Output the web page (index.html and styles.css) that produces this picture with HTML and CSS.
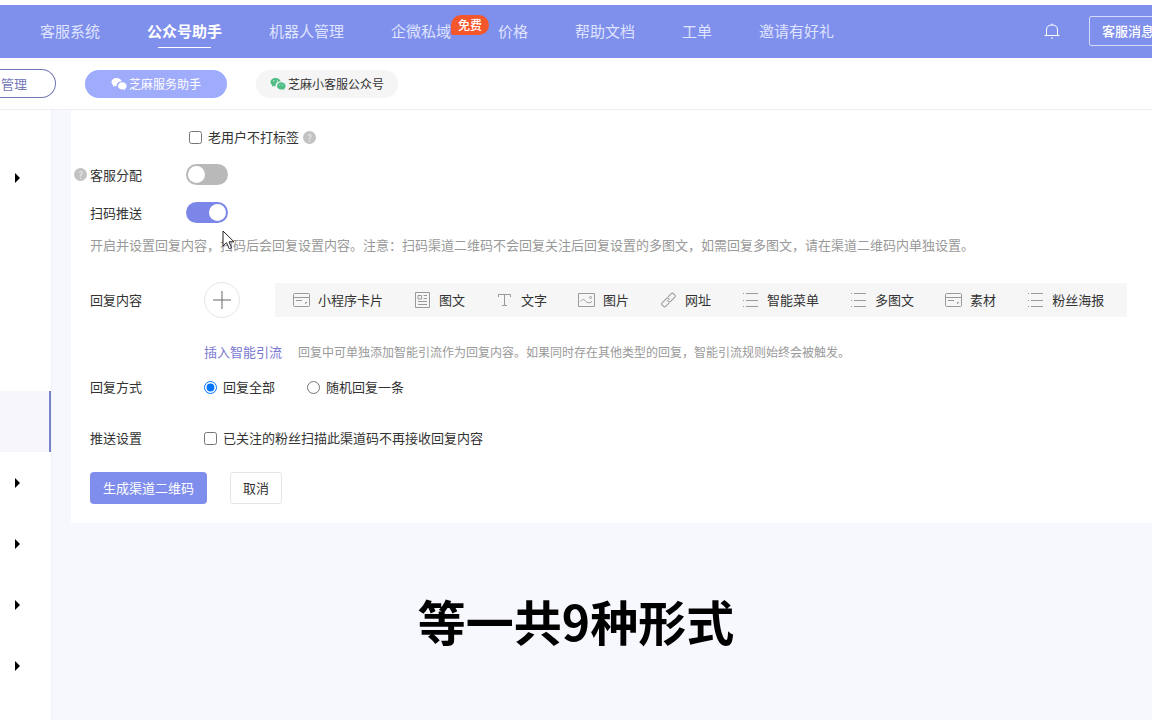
FILE: index.html
```html
<!DOCTYPE html>
<html lang="zh-CN">
<head>
<meta charset="utf-8">
<title>公众号助手</title>
<link rel="stylesheet" href="styles.css">
</head>
<body>
<svg class="defs" aria-hidden="true">
  <symbol id="wechat" viewBox="0 0 16 14">
    <path fill="currentColor" d="M5.6 1C2.7 1 .5 2.8.5 5.100c0 1.300.7 2.400 1.800 3.200l-.5 1.500 1.800-.9c.6.200 1.200.3 1.900.3C5.300 6.300 7.700 4.200 10.700 4.400 10.200 2.400 8.100 1 5.600 1z"/>
    <path fill="currentColor" d="M15.600 8.900c0-2-1.900-3.600-4.300-3.600S7 6.900 7 8.900s1.900 3.600 4.300 3.600c.5 0 1-.1 1.500-.2l1.500.9-.4-1.300c1-.700 1.700-1.800 1.700-3z"/>
    <circle class="eye" cx="3.900" cy="3.900" r=".6"/><circle class="eye" cx="7.300" cy="3.900" r=".6"/>
    <circle class="eye" cx="9.900" cy="8" r=".5"/><circle class="eye" cx="12.700" cy="8" r=".5"/>
  </symbol>
  <symbol id="card" viewBox="0 0 17 14"><path d="M1.500.5h14q1 0 1 1v11q0 1-1 1h-14q-1 0-1-1v-11q0-1 1-1zM.5 4.500h16M3 7.500h6M12.500 11V9.500h1.500"/></symbol>
  <symbol id="article" viewBox="0 0 17 16"><path d="M1.500.5h14v15h-14zM4 3.500h3.500v3.500H4zM9.500 3.500H13M9.500 6.500H13M4 9.500h9M4 12.500h9"/></symbol>
  <symbol id="text" viewBox="0 0 17 14"><path d="M2.500 4V1.500h12V4M8.500 1.500v11M6 12.500h5"/></symbol>
  <symbol id="image" viewBox="0 0 17 14"><path d="M.5.5h16v13H.5zM2.500 8.500c2-2.500 3.500-2.500 5-.5s3.500 2.500 6.500.500"/><circle cx="12.500" cy="4.500" r="1"/></symbol>
  <symbol id="link" viewBox="0 0 17 16"><g transform="rotate(-45 8.500 8)"><path d="M7 10.500H2Q.5 10.500.5 9V7Q.5 5.500 2 5.500H8Q9.500 5.500 9.500 7V8.500M10 5.500H15Q16.500 5.500 16.500 7V9Q16.500 10.500 15 10.500H9Q7.500 10.500 7.500 9V7.500"/></g></symbol>
  <symbol id="list" viewBox="0 0 17 14"><path d="M4 .5h12M4 7.500h12M4 13.500h12M1 .5h1M1 7.500h1M1 13.500h1"/></symbol>
</svg>

<header class="topbar">
  <nav class="nav">
    <a href="#">客服系统</a>
    <a href="#" class="current">公众号助手</a>
    <a href="#">机器人管理</a>
    <a href="#">企微私域<span class="badge">免费</span></a>
    <a href="#">价格</a>
    <a href="#">帮助文档</a>
    <a href="#">工单</a>
    <a href="#">邀请有好礼</a>
  </nav>
  <div class="tools">
    <button class="bell" type="button" aria-label="通知">
      <svg viewBox="0 0 16 16"><path d="M.5 12.500h15M2.500 12.500V7q0-5 5.500-5t5.500 5v5.500M8 2V.500M7 15h2"/></svg>
    </button>
    <button class="messages" type="button">客服消息</button>
  </div>
</header>

<div class="accounts">
  <button class="manage" type="button">管理</button>
  <button class="account selected" type="button"><svg><use href="#wechat"/></svg>芝麻服务助手</button>
  <button class="account" type="button"><svg><use href="#wechat"/></svg>芝麻小客服公众号</button>
</div>

<div class="body">
  <aside class="side">
    <div class="entry group"></div>
    <div class="entry"></div>
    <div class="entry"></div>
    <div class="entry"></div>
    <div class="entry active"></div>
    <div class="entry group"></div>
    <div class="entry group"></div>
    <div class="entry group"></div>
    <div class="entry group"></div>
  </aside>
  <main class="content">
    <form class="panel">
      <div class="row tag-row">
        <label class="choice"><input type="checkbox">老用户不打标签</label>
        <span class="help">?</span>
      </div>
      <div class="row assign-row">
        <span class="help">?</span>
        <label class="name" for="assign">客服分配</label>
        <input class="switch" id="assign" type="checkbox">
      </div>
      <div class="row push-row">
        <label class="name" for="push">扫码推送</label>
        <input class="switch" id="push" type="checkbox" checked>
        <svg class="pointer" viewBox="0 0 13 20"><path d="M1 1v15l3.500-3.300 2.700 6 2.400-1-2.600-5.900H12z" fill="#fff" stroke="#222"/></svg>
      </div>
      <p class="note">开启并设置回复内容，扫码后会回复设置内容。注意：扫码渠道二维码不会回复关注后回复设置的多图文，如需回复多图文，请在渠道二维码内单独设置。</p>
      <div class="row reply-row">
        <span class="name wide">回复内容</span>
        <button class="add" type="button" aria-label="添加"><svg viewBox="0 0 18 18"><path d="M9 0v18M0 9h18"/></svg></button>
        <div class="types">
          <button type="button"><svg><use href="#card"/></svg>小程序卡片</button>
          <button type="button"><svg><use href="#article"/></svg>图文</button>
          <button type="button"><svg><use href="#text"/></svg>文字</button>
          <button type="button"><svg><use href="#image"/></svg>图片</button>
          <button type="button"><svg><use href="#link"/></svg>网址</button>
          <button type="button"><svg><use href="#list"/></svg>智能菜单</button>
          <button type="button"><svg><use href="#list"/></svg>多图文</button>
          <button type="button"><svg><use href="#card"/></svg>素材</button>
          <button type="button"><svg><use href="#list"/></svg>粉丝海报</button>
        </div>
      </div>
      <div class="row guide-row">
        <a href="#">插入智能引流</a>
        <span>回复中可单独添加智能引流作为回复内容。如果同时存在其他类型的回复，智能引流规则始终会被触发。</span>
      </div>
      <div class="row mode-row">
        <span class="name wide">回复方式</span>
        <label class="choice"><input type="radio" name="mode" checked>回复全部</label>
        <label class="choice"><input type="radio" name="mode">随机回复一条</label>
      </div>
      <div class="row limit-row">
        <span class="name wide">推送设置</span>
        <label class="choice"><input type="checkbox">已关注的粉丝扫描此渠道码不再接收回复内容</label>
      </div>
      <div class="row actions">
        <button class="primary" type="button">生成渠道二维码</button>
        <button class="cancel" type="button">取消</button>
      </div>
    </form>
  </main>
</div>
<p class="caption">等一共9种形式</p>
</body>
</html>
```
FILE: styles.css
```css
* { box-sizing: border-box; }

body {
  margin: 0;
  padding-top: 5px;
  min-height: 100vh;
  display: flex;
  flex-direction: column;
  overflow: hidden;
  background: #fff;
  color: #333;
  font: 13px/20px "Noto Sans CJK SC", sans-serif;
}

button {
  margin: 0;
  padding: 0;
  border: 0;
  background: none;
  color: inherit;
  font: inherit;
  white-space: nowrap;
}

a { text-decoration: none; }
input { margin: 0; }
.defs { position: absolute; width: 0; height: 0; }

/* Top navigation */
.topbar {
  display: flex;
  align-items: center;
  justify-content: space-between;
  height: 53px;
  padding: 0 0 2px 40px;
  overflow: hidden;
  background: #7f8fec;
}
.nav { display: flex; gap: 47px; }
.nav a {
  position: relative;
  color: #dfe4ff;
  font-size: 15px;
  line-height: 32px;
  white-space: nowrap;
}
.nav .current { color: #fff; font-weight: 700; }
.nav .current::after {
  content: "";
  position: absolute;
  left: 11px;
  right: 11px;
  bottom: -1px;
  height: 1px;
  background: #fff;
}
.badge {
  position: absolute;
  left: 100%;
  top: 0;
  padding: 0 7px;
  border-radius: 10px 10px 10px 2px;
  background: #f5572c;
  color: #fff;
  font-size: 12px;
  font-weight: 500;
  line-height: 20px;
}
.tools { display: flex; align-items: center; gap: 29px; margin-right: -15px; }
.bell { display: flex; }
.bell svg { width: 16px; height: 16px; fill: none; stroke: #fff; }
.messages {
  height: 30px;
  padding: 0 12px;
  border: 1px solid #d5dafb;
  border-radius: 2px;
  color: #fff;
  font-weight: 500;
}

/* Account switcher */
.accounts {
  display: flex;
  align-items: center;
  height: 52px;
  gap: 29px;
  border-bottom: 1px solid #f0f0f3;
}
.manage {
  height: 29px;
  padding: 0 28px 0 1px;
  border: 1px solid #7477b5;
  border-left: 0;
  border-radius: 0 15px 15px 0;
  color: #7679b8;
}
.account {
  display: flex;
  align-items: center;
  gap: 2px;
  height: 28px;
  padding: 0 14px;
  border-radius: 14px;
  background: #f5f5f5;
  font-size: 12px;
}
.account svg { width: 16px; height: 14px; color: #4fbd86; }
.eye { fill: #f5f5f5; }
.selected { padding: 0 26px; background: #9fabfb; color: #fff; }
.selected svg { color: #fff; }

/* Sidebar */
.body { display: flex; flex: 1; background: #f7f8fd; }
.side {
  width: 52px;
  flex: none;
  padding-top: 37px;
  background: #fff;
  border-right: 1px solid #eef2f8;
}
.entry { display: flex; align-items: center; height: 61px; padding-left: 15px; }
.group::before {
  content: "";
  border: 5px solid transparent;
  border-left-color: #000;
  border-right-width: 0;
}
.active { background: #f6f6fc; border-right: 2px solid #7684c8; }

/* Form panel */
.content { flex: 1; min-width: 0; padding-left: 19px; }
.panel { padding: 17px 0 19px; background: #fff; }
.row { display: flex; align-items: center; padding-left: 19px; }
.name { width: 96px; flex: none; }
.wide { width: 114px; }
.choice { display: flex; align-items: center; gap: 6px; white-space: nowrap; }
.choice input { width: 13px; height: 13px; }
.help {
  width: 13px;
  height: 13px;
  border-radius: 50%;
  background: #c2c2c2;
  color: #eee;
  font-size: 10px;
  line-height: 13px;
  text-align: center;
}
.tag-row { padding-left: 118px; gap: 4px; }
.assign-row { margin-top: 17px; padding-left: 3px; }
.assign-row .help { margin-right: 3px; }
.push-row { position: relative; margin-top: 17px; }
.switch {
  appearance: none;
  display: flex;
  width: 42px;
  height: 21px;
  padding: 2px;
  border-radius: 11px;
  background: #b9b9b9;
}
.switch::before {
  content: "";
  width: 17px;
  height: 17px;
  border-radius: 50%;
  background: #fff;
}
.switch:checked { justify-content: flex-end; background: #7c86e8; }
.pointer {
  position: absolute;
  left: 151px;
  top: 28px;
  width: 13px;
  height: 20px;
}
.note { margin: 12px 0 0; padding-left: 19px; color: #999; }

.reply-row { margin-top: 27px; }
.add {
  display: flex;
  align-items: center;
  justify-content: center;
  width: 36px;
  height: 36px;
  flex: none;
  border: 1px solid #e6e6e6;
  border-radius: 50%;
}
.add svg { width: 18px; height: 18px; stroke: #666; }
.types {
  display: flex;
  gap: 31px;
  height: 34px;
  margin-left: 35px;
  padding: 0 23px 0 18px;
  background: #f6f6f7;
}
.types button { display: flex; align-items: center; gap: 8px; }
.types svg { width: 17px; height: 16px; fill: none; stroke: #999; }

.guide-row { margin-top: 24px; padding-left: 133px; gap: 16px; }
.guide-row a { color: #7b78d2; white-space: nowrap; }
.guide-row span { color: #999; font-size: 12px; }
.mode-row { margin-top: 15px; }
.mode-row .choice { margin-right: 32px; }
.limit-row { margin-top: 31px; }
.actions { margin-top: 24px; gap: 23px; }
.primary {
  height: 32px;
  padding: 0 13px;
  border-radius: 4px;
  background: #7f8eec;
  color: #fff;
}
.cancel {
  height: 32px;
  padding: 0 12px;
  border: 1px solid #e4e4e4;
  border-radius: 3px;
}

/* Subtitle shown over the page */
.caption {
  position: fixed;
  left: 0;
  right: 0;
  bottom: 70px;
  margin: 0;
  color: #000;
  font-size: 48px;
  font-weight: 700;
  line-height: 60px;
  text-align: center;
}
```
